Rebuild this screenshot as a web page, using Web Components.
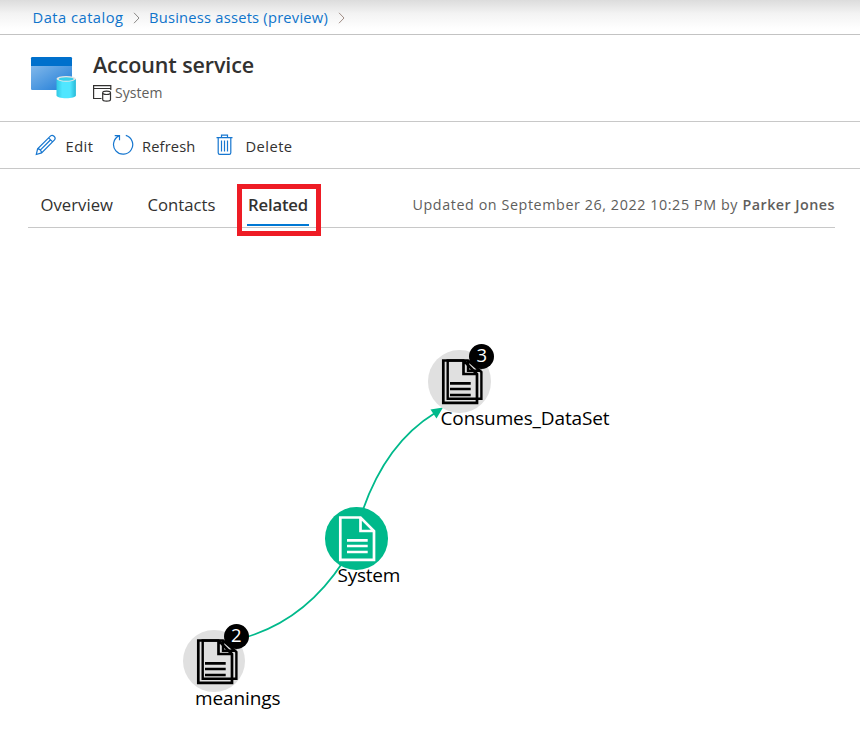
<!DOCTYPE html>
<html lang="en">
<head>
<meta charset="utf-8">
<title>Account service</title>
<style>
body{margin:0;background:#fff;font-family:"Open Sans","Noto Sans",sans-serif;color:#323130}
</style>
</head>
<body>
<asset-page></asset-page>
<script>
const define = (name, html, ready) => customElements.define(name, class extends HTMLElement {
  connectedCallback() {
    if (this.shadowRoot) return;
    const t = document.createElement('template');
    t.innerHTML = html;
    this.attachShadow({mode: 'open'}).append(t.content.cloneNode(true));
    if (ready) ready(this, this.shadowRoot);
  }
});

// A run of text tracked to an exact width given by its "w" attribute.
define('fit-text', `<style>:host{display:inline-block;white-space:pre;flex:none}span{display:inline-block}</style><span><slot></slot></span>`, (el, root) => {
  const w = parseFloat(el.getAttribute('w'));
  const span = root.querySelector('span');
  const natural = span.getBoundingClientRect().width;
  el.style.width = w + 'px';
  span.style.letterSpacing = ((w - natural) / el.textContent.length) + 'px';
});

define('crumb-bar', `<style>
:host{display:flex;align-items:center;height:34px;box-sizing:content-box;border-bottom:1px solid #c3c3c3;padding-left:32.500px;font-size:14.700px;line-height:34px;color:#0f74cb;background:linear-gradient(#dcdcdc,#f3f3f3 40%,#fff 85%)}
svg{width:7px;height:12px;margin:2px 9px 0 9.500px;flex:none}
</style>
<fit-text w="91">Data catalog</fit-text>
<svg viewBox="0 0 7 12" fill="none" stroke="#8a8886"><path d="M1 .8 6 6 1 11.2"/></svg>
<fit-text w="179">Business assets (preview)</fit-text>
<svg viewBox="0 0 7 12" fill="none" stroke="#a08d85"><path d="M1 .8 6 6 1 11.2"/></svg>`);

define('asset-header', `<style>
:host{display:flex;height:86px;border-bottom:1px solid #c8c8c8;padding-left:30px}
.logo{width:48px;height:44px;margin:21px 15px 0 0;flex:none}
.t{font-size:21.5px;font-weight:600;line-height:28px;margin-top:16px;height:28px}
.s{display:flex;font-size:14px;line-height:20px;color:#605e5c;margin-top:3px}
.s svg{width:19px;height:18px;margin:2px 3px 0 0}
.s fit-text{margin-top:1px}
</style>
<svg class="logo" viewBox="0 0 48 44">
<defs>
<linearGradient id="w" x1="0" y1="0" x2="1" y2="1"><stop offset="0" stop-color="#83b9eb"/><stop offset="1" stop-color="#1c7ad6"/></linearGradient>
<linearGradient id="c"><stop offset="0" stop-color="#32c8e4"/><stop offset=".3" stop-color="#50e6ff"/><stop offset=".7" stop-color="#50e6ff"/><stop offset="1" stop-color="#27b9d7"/></linearGradient>
</defs>
<path fill="url(#w)" d="M1 9h41v23.7q0 1.3-1.3 1.3H2.3Q1 34 1 32.700z"/>
<path fill="#0070cc" d="M1 2.300Q1 1 2.300 1h38.400Q42 1 42 2.300V10H1z"/>
<path fill="url(#c)" d="M26.500 23v16.500c0 1.600 4.400 2.700 9.700 2.700s9.700-1.100 9.700-2.700V23z"/>
<ellipse cx="36.200" cy="22.800" rx="9.700" ry="2.900" fill="#e6e6e6"/>
<ellipse cx="36.200" cy="23" rx="7.500" ry="1.800" fill="#38cfea"/>
</svg>
<div><div class="t"><fit-text w="161">Account service</fit-text></div>
<div class="s"><svg viewBox="0 0 19 18" fill="none" stroke="#323130" stroke-width="1.200"><path d="M8.500 14.500H.600V1.600H17.800V6M.600 4.500H17.800"/><path d="M9.700 9v6.500c0 1 1.700 1.600 3.900 1.600s3.900-.6 3.900-1.600V9"/><ellipse cx="13.600" cy="8.800" rx="3.900" ry="1.700"/></svg><fit-text w="47.500">System</fit-text></div></div>`);

define('command-bar', `<style>
:host{display:flex;box-sizing:border-box;height:47px;border-bottom:1px solid #c8c8c8;padding:2px 0 0 35px;font-size:14.700px;line-height:44px}
svg{width:22px;height:22px;margin-top:10px;flex:none;fill:none;stroke:#1676cf;stroke-width:1.200}
.e{margin-right:8.500px}.r{margin:10px 8.500px 0 18px}.d{margin:10px 9px 0 19px}
</style>
<svg class="e" viewBox="0 0 22 22"><path d="M1.300 20.500 2.600 14.900 15.600 1.900Q17.200.600 19 2.200 21 4.100 19.500 5.900L6.600 18.900zM2.600 14.900Q6 15 6.600 18.900M13.600 3.900 17.600 7.900M15.400 6 5 16.400"/></svg>
<fit-text w="28">Edit</fit-text>
<svg class="r" viewBox="0 0 22 22"><path d="M13.800 1.400A9.600 9.600 0 1 1 7.100 1.900M2.700 1.600H7.500V6.300"/></svg>
<fit-text w="53.500">Refresh</fit-text>
<svg class="d" viewBox="0 0 22 22"><path d="M1.500 3.600H17.500M3.200 3.600V18.800Q3.200 20.400 4.800 20.400H14.200Q15.800 20.400 15.800 18.800V3.600M6.500 3.600V1.200H12.500V3.600M6.500 6.500V17.500M9.500 6.500V17.500M12.500 6.500V17.500"/></svg>
<fit-text w="47">Delete</fit-text>`);

define('tab-bar', `<style>
:host{display:flex;box-sizing:border-box;height:59px;border-bottom:1px solid #c8c8c8;margin:0 25px 0 28px;padding-left:12.500px;line-height:46px;font-size:16.700px}
.tab{margin-top:13px}.c{margin-left:34.500px}
.sel{box-sizing:border-box;width:84px;height:52px;border:5px solid #ee1c25;margin:15px 0 -9px 21.500px;padding:0 7px 0 5px;font-weight:600;line-height:31.500px;flex:none;position:relative;z-index:1}
.sel div{box-sizing:border-box;border-bottom:2px solid #0078d4;height:37px;padding-left:1px}
.u{margin:13px 0 0 auto;font-size:14.300px;color:#605e5c;display:flex;gap:4.500px}
b{font-weight:600}
</style>
<fit-text class="tab" w="72.500">Overview</fit-text>
<fit-text class="tab c" w="68">Contacts</fit-text>
<div class="sel"><div><fit-text w="60">Related</fit-text></div></div>
<div class="u"><fit-text w="325.500">Updated on September 26, 2022 10:25 PM by</fit-text><b><fit-text w="92.500">Parker Jones</fit-text></b></div>`);

// One graph node: a disc with a document glyph, optionally stacked with a count badge.
define('graph-node', `<style>
:host{position:absolute;display:block;width:62.500px;height:62.500px}
.disc{position:absolute;inset:0;border-radius:50%;background:#00b98b}
:host([count]) .disc{background:#e0e0e0}
svg{position:absolute;left:0;top:0;overflow:visible;fill:none;stroke:#fff;stroke-width:2.700}
:host([count]) svg{stroke:#000}
.back{display:none}:host([count]) .back{display:inline}
.badge{display:none;position:absolute;left:41.300px;top:-6px;width:25px;height:25px;border-radius:50%;background:#000;color:#fff;font-size:18.500px;line-height:22.500px;text-align:center}
:host([count]) .badge{display:block}
.label{position:absolute;left:12.500px;top:54px;font-size:19px;line-height:28px;color:#000}
</style>
<div class="disc"></div>
<svg width="63" height="63" viewBox="0 0 63 63"><path class="back" stroke-width="2.400" d="M19.700 10.500H40L53.400 22V48.800H19.700zM40 10.500V20.700H53.400"/><path class="front" d="M15.300 10.500H35.500L49 24V52.900H15.300zM35.500 10.500V24H49M22 33.300H42.700M22 39H42.700M22 45H42.700"/></svg>
<div class="badge"></div><div class="label"><slot></slot></div>`, (el, root) => {
  root.querySelector('.badge').textContent = el.getAttribute('count') || '';
});

define('relation-graph', `<style>
:host{display:block;position:relative;height:501px;overflow:hidden}
.edges{position:absolute;left:0;top:0}
</style>
<svg class="edges" width="860" height="501" viewBox="0 228 860 501" fill="none" stroke="#00b98b" stroke-width="1.800"><path d="M362.500 511Q386 443 435 413M343 562Q305 620 245 637.500"/><path fill="#00b98b" stroke="none" d="M443 407.500 436.500 418.500 430.500 409.500z"/></svg>
<graph-node style="left:325px;top:279px"><fit-text w="62.500">System</fit-text></graph-node>
<graph-node count="3" style="left:428px;top:122px"><fit-text w="169">Consumes_DataSet</fit-text></graph-node>
<graph-node count="2" style="left:182.500px;top:401.600px"><fit-text w="85.500">meanings</fit-text></graph-node>`);

define('asset-page', `<style>:host{display:flex;flex-direction:column;width:860px;height:729px;overflow:hidden}</style>
<crumb-bar></crumb-bar><asset-header></asset-header><command-bar></command-bar><tab-bar></tab-bar><relation-graph></relation-graph>`);
</script>
</body>
</html>
